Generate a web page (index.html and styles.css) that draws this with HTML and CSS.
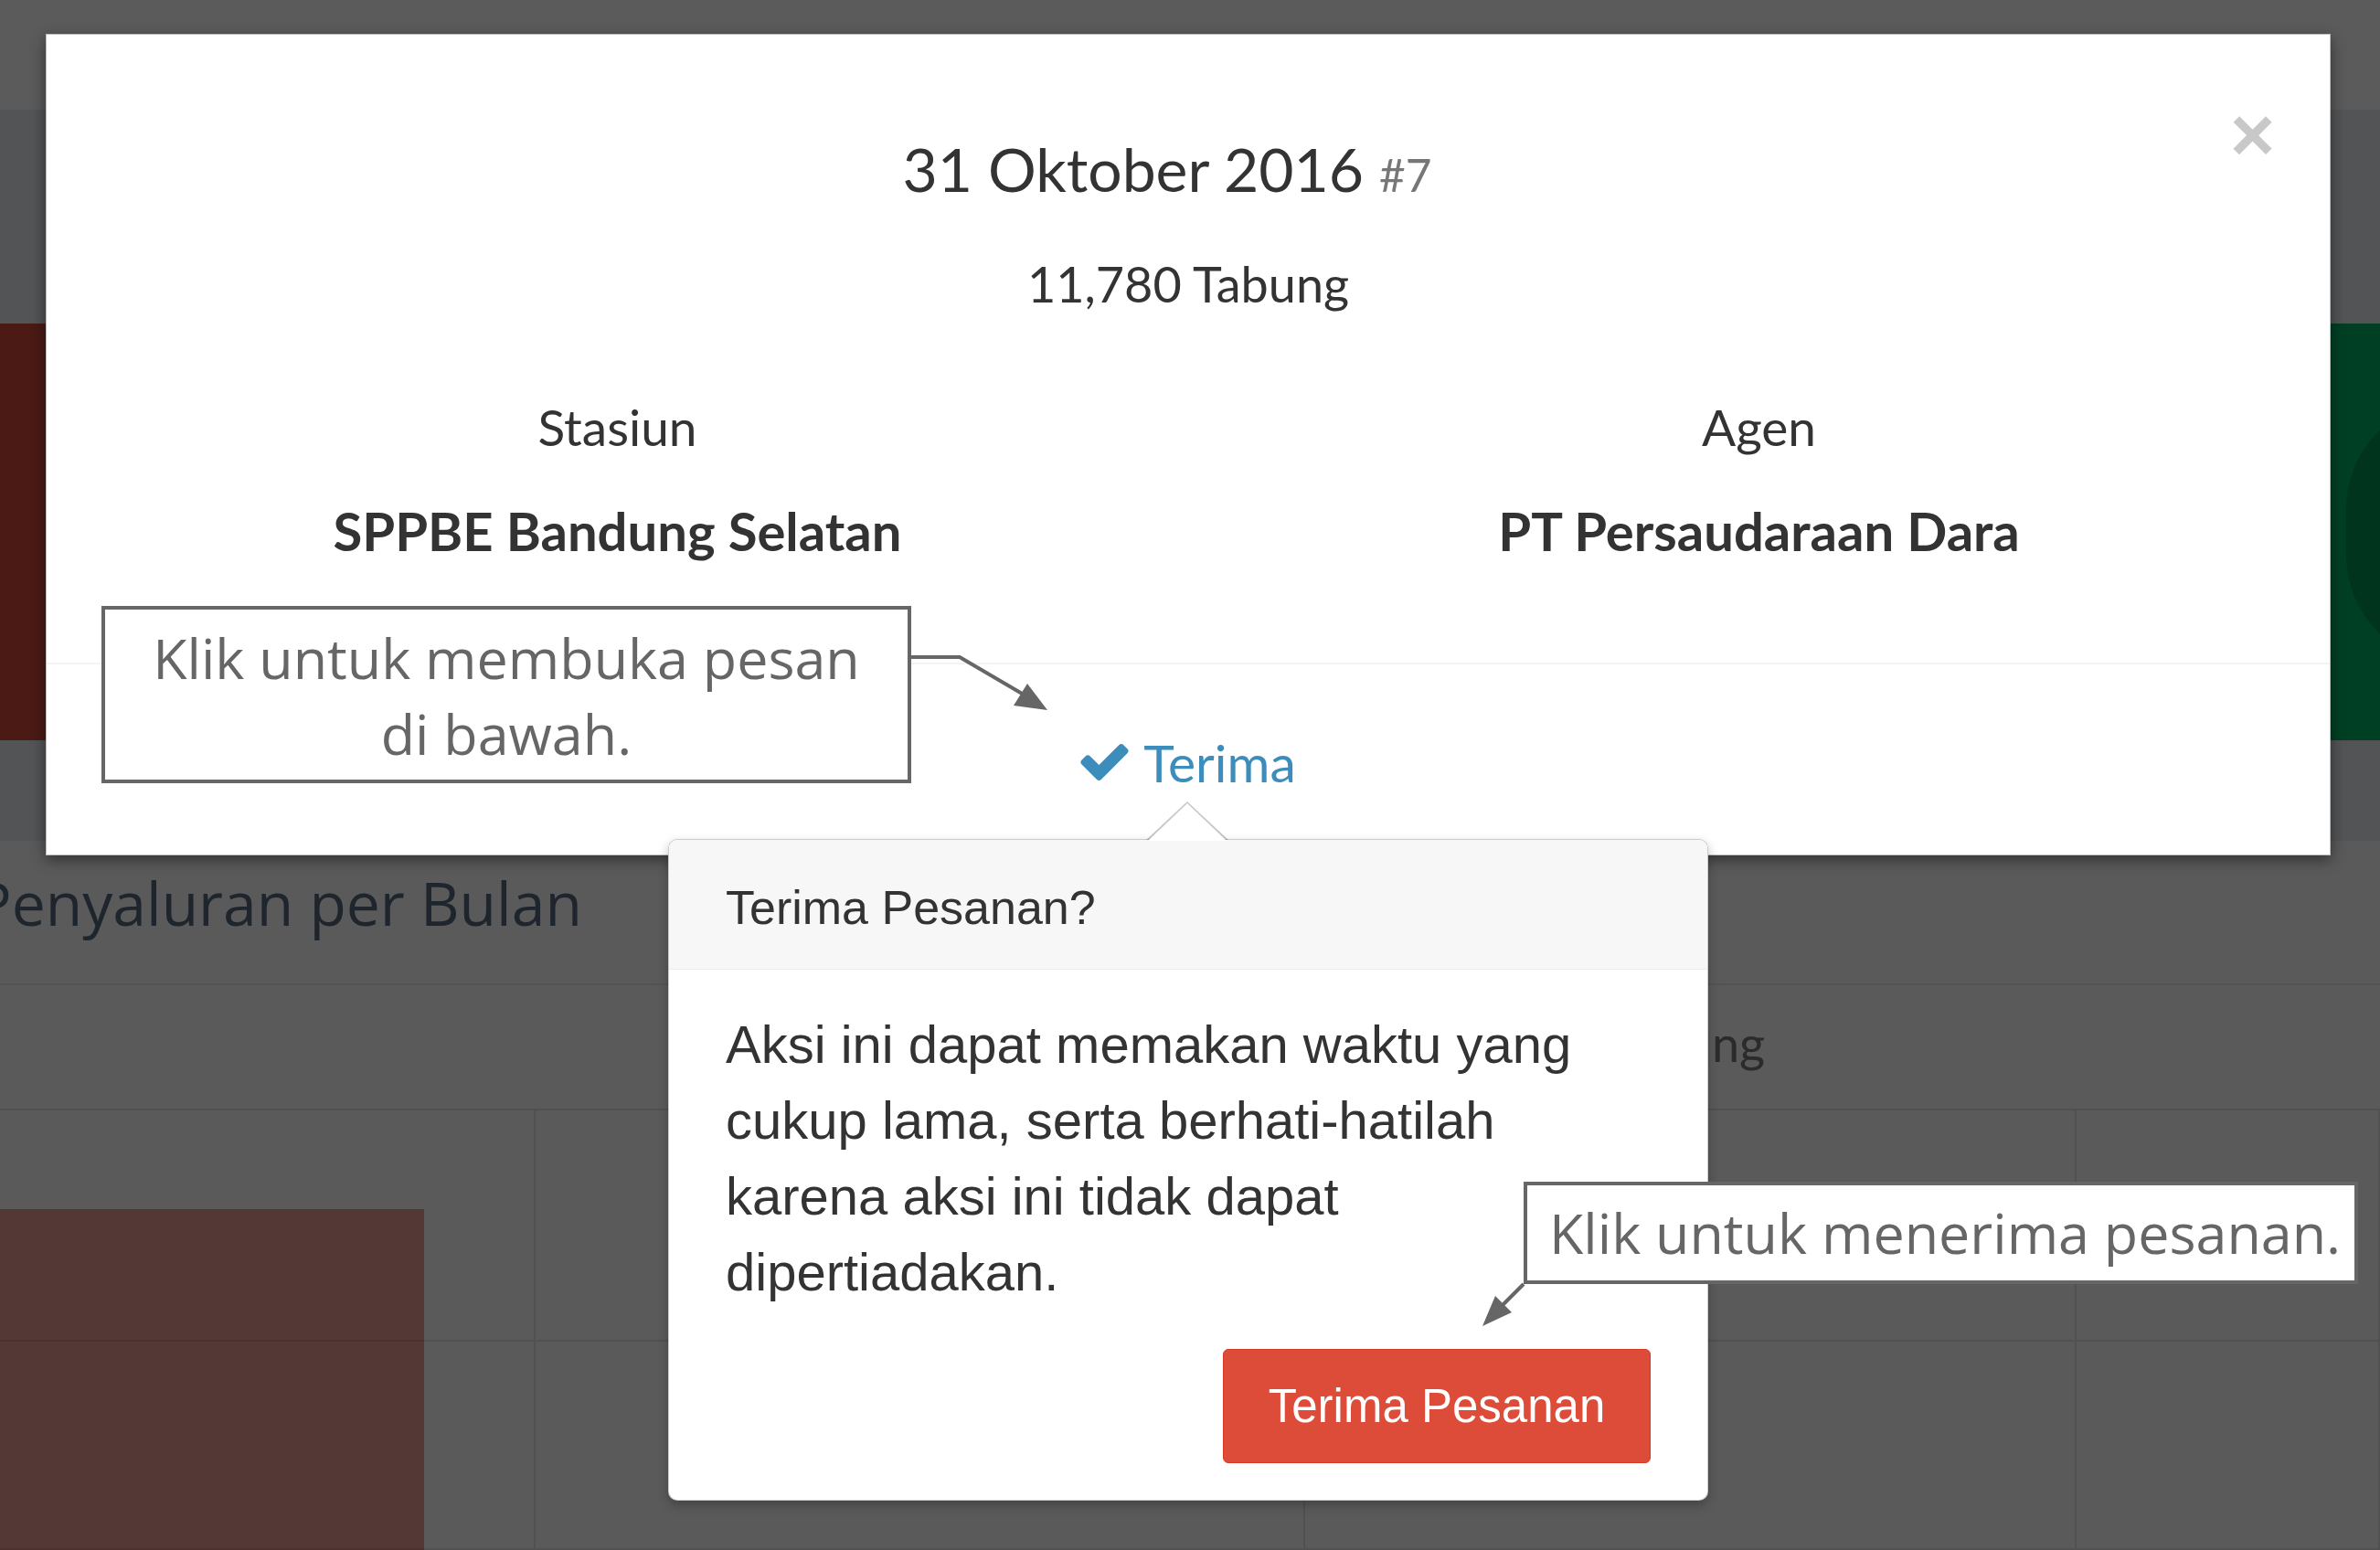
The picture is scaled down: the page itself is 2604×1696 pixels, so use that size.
FILE: index.html
```html
<!DOCTYPE html>
<html lang="id">
<head>
<meta charset="utf-8">
<title>Pesanan</title>
<link rel="stylesheet" href="styles.css">
</head>
<body>
  <div class="page">
    <header class="navbar"></header>
    <main class="content">
      <div class="stats">
        <div class="stat stat-red"></div>
        <div class="stat stat-green"><span class="stat-icon"></span></div>
      </div>
      <section class="chart-box">
        <div class="chart-head"><h3 class="chart-title">Penyaluran per Bulan</h3></div>
        <div class="chart-cols"><span class="col-label">Tabung</span></div>
        <div class="chart-body">
          <div class="bar"></div>
          <div class="cell"></div><div class="cell"></div><div class="cell"></div><div class="cell"></div>
          <div class="cell"></div><div class="cell"></div><div class="cell"></div><div class="cell"></div>
        </div>
      </section>
    </main>
  </div>

  <div class="modal">
    <div class="modal-header">
      <h4 class="modal-title">31 Oktober 2016 <small>#7</small></h4>
      <button class="close" type="button">×</button>
    </div>
    <div class="modal-body">
      <p class="total">11,780 Tabung</p>
      <div class="parties">
        <div class="party">
          <p class="party-label">Stasiun</p>
          <p class="party-name">SPPBE Bandung Selatan</p>
        </div>
        <div class="party">
          <p class="party-label">Agen</p>
          <p class="party-name">PT Persaudaraan Dara</p>
        </div>
      </div>
    </div>
    <div class="modal-footer">
      <a class="terima" href="#">
        <svg class="check" viewBox="121 334 1550 1188" width="53" height="40" aria-hidden="true"><path d="M1671 566q0 40-28 68l-724 724-136 136q-28 28-68 28t-68-28l-136-136-362-362q-28-28-28-68t28-68l136-136q28-28 68-28t68 28l294 295 656-657q28-28 68-28t68 28l136 136q28 28 28 68z" fill="#3c8dbc"/></svg>
        <span>Terima</span>
      </a>
    </div>
  </div>

  <div class="popover">
    <h3 class="popover-title">Terima Pesanan?</h3>
    <div class="popover-content">
      <p>Aksi ini dapat memakan waktu yang cukup lama, serta berhati-hatilah karena aksi ini tidak dapat dipertiadakan.</p>
      <div class="popover-actions">
        <button class="btn-danger" type="button">Terima Pesanan</button>
      </div>
    </div>
  </div>

  <div class="callout callout-open">Klik untuk membuka pesan di bawah.</div>
  <div class="callout callout-accept">Klik untuk menerima pesanan.</div>

  <svg class="annotations" width="2604" height="1696" viewBox="0 0 2604 1696" aria-hidden="true">
    <polyline points="997,719 1050,719 1120,760" fill="none" stroke="#666" stroke-width="4"/>
    <polygon points="1146,777 1109,772 1124,748" fill="#666"/>
    <line x1="1667" y1="1405" x2="1643" y2="1429" stroke="#666" stroke-width="4"/>
    <polygon points="1622,1451 1654,1436 1636,1418" fill="#666"/>
  </svg>
</body>
</html>
```

FILE: styles.css
```css
* {
  box-sizing: border-box;
  margin: 0;
  padding: 0;
}

html,
body {
  width: 2604px;
  height: 1696px;
  overflow: hidden;
}

body {
  position: relative;
  background: #5a5a5a;
  font-family: Lato, "Open Sans", sans-serif;
}

/* ---------- dimmed page behind the modal ---------- */
.page {
  display: flex;
  flex-direction: column;
  height: 1696px;
  background: #535455;
}

.navbar {
  flex: none;
  height: 120px;
  background: #5b5b5b;
}

.content {
  flex: 1;
  display: flex;
  flex-direction: column;
  padding-top: 234px;
}

.stats {
  flex: none;
  height: 456px;
  display: flex;
  justify-content: space-between;
}

.stat {
  height: 100%;
}

.stat-red {
  width: 560px;
  background: #4b1a15;
}

.stat-green {
  width: 520px;
  background: #003f24;
  display: flex;
  align-items: center;
  justify-content: flex-end;
  overflow: hidden;
}

.stat-icon {
  width: 300px;
  height: 290px;
  margin-right: -263px;
  border-radius: 120px 40px 40px 120px;
  background: #00341d;
}

.chart-box {
  flex: 1;
  margin-top: 110px;
  display: flex;
  flex-direction: column;
  background: #5a5a5a;
}

.chart-head {
  height: 158px;
  padding-top: 22px;
  border-bottom: 2px solid #535353;
}

.chart-title {
  margin-left: -27px;
  font-family: "Open Sans", sans-serif;
  font-weight: 400;
  font-size: 66px;
  line-height: 90px;
  color: #1e252c;
  white-space: nowrap;
}

.chart-cols {
  height: 137px;
  display: flex;
  align-items: center;
  padding-left: 1760px;
  padding-bottom: 8px;
  border-bottom: 2px solid #505050;
}

.col-label {
  font-size: 54px;
  color: #2b2b2b;
}

.chart-body {
  flex: 1;
  position: relative;
  display: grid;
  grid-template-columns: 586px 842px 844px 1fr;
  grid-template-rows: 253px 1fr;
}

.bar {
  position: absolute;
  left: 0;
  top: 108px;
  width: 464px;
  bottom: 0;
  background: #533836;
}

.cell {
  position: relative;
  border-right: 2px solid rgba(0, 0, 0, 0.09);
  border-bottom: 2px solid rgba(0, 0, 0, 0.09);
}

/* ---------- modal ---------- */
.modal {
  position: absolute;
  left: 50px;
  top: 37px;
  width: 2500px;
  height: 899px;
  background: #fff;
  border: 1px solid rgba(0, 0, 0, 0.25);
  box-shadow: 0 5px 15px rgba(0, 0, 0, 0.45);
  color: #333;
}

.modal-header {
  display: grid;
  grid-template-columns: 1fr auto;
  padding: 86px 63px 0 63px;
}

.modal-title {
  margin-top: 11px;
  text-align: center;
  font-weight: 400;
  font-size: 66px;
  line-height: 100px;
  color: #333;
}

.modal-title small {
  font-size: 75%;
  color: #777;
}

.close {
  align-self: start;
  width: 46px;
  border: 0;
  background: none;
  font-family: "Liberation Sans", Arial, sans-serif;
  font-weight: 700;
  font-size: 84px;
  line-height: 46px;
  color: #c8c8c8;
  text-align: center;
}

.total {
  margin-top: 30px;
  text-align: center;
  font-size: 54px;
  line-height: 80px;
}

.parties {
  margin-top: 76px;
  display: grid;
  grid-template-columns: 1fr 1fr;
  text-align: center;
}

.party-label {
  font-size: 55px;
  line-height: 80px;
}

.party-name {
  margin-top: 34px;
  font-weight: 700;
  font-size: 58px;
  line-height: 80px;
}

.modal-footer {
  margin-top: 104px;
  padding-top: 67px;
  border-top: 2px solid #f4f4f4;
  text-align: center;
}

.terima {
  display: inline-flex;
  align-items: center;
  gap: 16px;
  color: #3c8dbc;
  text-decoration: none;
  font-size: 57px;
  line-height: 80px;
}

.check {
  display: block;
}

/* ---------- popover ---------- */
.popover {
  position: absolute;
  left: 731px;
  top: 918px;
  width: 1138px;
  background: #fff;
  border: 1px solid rgba(0, 0, 0, 0.2);
  border-radius: 10px;
  box-shadow: 0 5px 12px rgba(0, 0, 0, 0.25);
  font-family: "Liberation Sans", Arial, sans-serif;
  color: #333;
}

.popover::before,
.popover::after {
  content: "";
  position: absolute;
  width: 0;
  height: 0;
  border-style: solid;
  border-color: transparent;
}

.popover::before {
  left: 522px;
  top: -42px;
  border-width: 0 45px 42px 45px;
  border-bottom-color: rgba(0, 0, 0, 0.22);
}

.popover::after {
  left: 524px;
  top: -40px;
  border-width: 0 43px 41px 43px;
  border-bottom-color: #fff;
}

.popover-title {
  padding: 43px 62px 36px;
  background: #f7f7f7;
  border-bottom: 1px solid #ebebeb;
  border-radius: 9px 9px 0 0;
  font-weight: 400;
  font-size: 52px;
  line-height: 62px;
}

.popover-content {
  padding: 40px 62px 40px;
}

.popover-content p {
  font-size: 58px;
  line-height: 83px;
}

.popover-actions {
  margin-top: 43px;
  display: flex;
  justify-content: flex-end;
}

.btn-danger {
  width: 468px;
  height: 125px;
  background: #dd4b39;
  border: 1px solid #d73925;
  border-radius: 6px;
  color: #fff;
  font-family: "Liberation Sans", Arial, sans-serif;
  font-size: 51px;
}

/* ---------- annotations ---------- */
.callout {
  position: absolute;
  background: #fff;
  border: 4px solid #666;
  font-family: "Open Sans", sans-serif;
  font-size: 61px;
  color: #666;
}

.callout-open {
  left: 111px;
  top: 663px;
  width: 886px;
  height: 194px;
  padding: 11px 30px 0;
  line-height: 83px;
  text-align: center;
}

.callout-accept {
  left: 1667px;
  top: 1293px;
  width: 913px;
  height: 112px;
  padding-left: 24px;
  line-height: 104px;
  white-space: nowrap;
}

.annotations {
  position: absolute;
  left: 0;
  top: 0;
  pointer-events: none;
}
```
